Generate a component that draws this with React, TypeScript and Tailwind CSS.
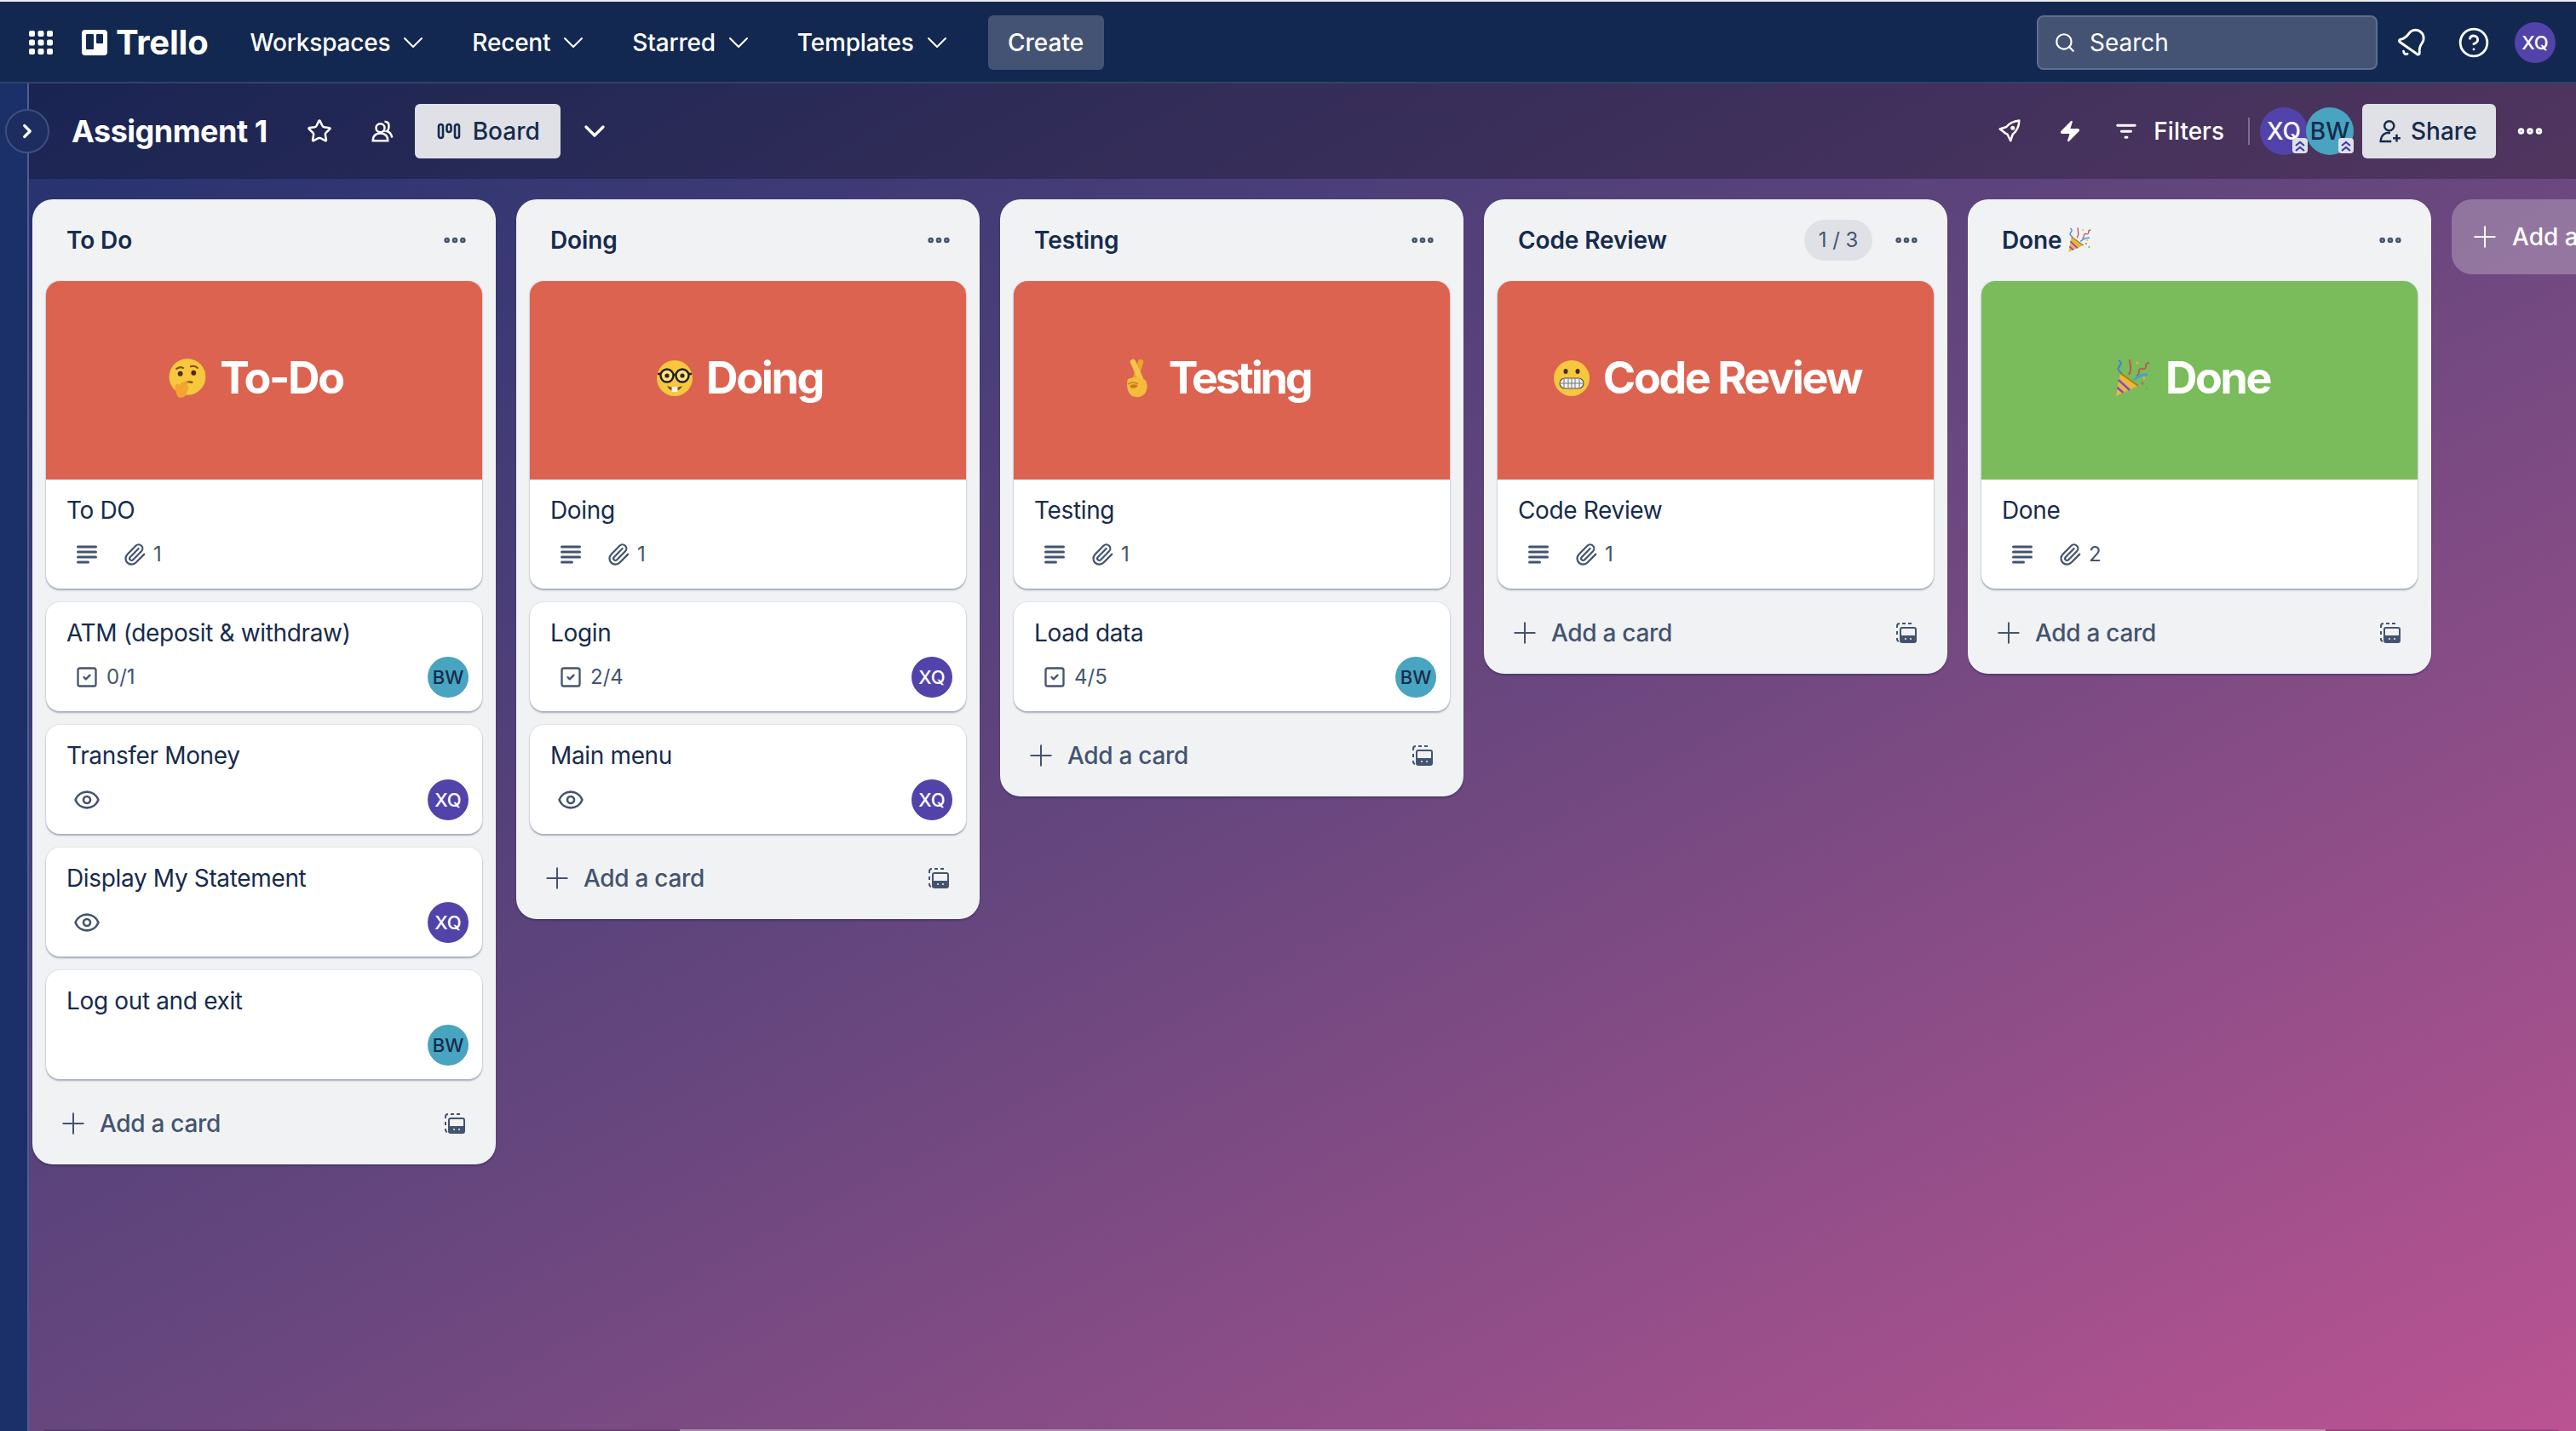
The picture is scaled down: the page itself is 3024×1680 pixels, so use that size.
import { Bell, ChevronDown, ChevronRight, CircleHelp, Ellipsis, Eye, Paperclip, Plus, Search, SquareCheck, Star, Zap } from 'lucide-react'

const font = { fontFamily: 'Inter, "Liberation Sans", sans-serif' }

function ThinkingFace() {
  return (
    <svg viewBox="0 0 44 44" className="w-[46px] h-[46px] shrink-0">
      <circle cx="22" cy="20.500" r="20.500" fill="#f7c83e" />
      <path d="M9 12q5-4 9-1M25 9q5-2 9 2" stroke="#7a4a12" strokeWidth="2" fill="none" />
      <circle cx="14" cy="17" r="2.800" fill="#4a2c0b" />
      <circle cx="29" cy="16" r="2.800" fill="#4a2c0b" />
      <path d="M18 28q6-3 10-1" stroke="#7a4a12" strokeWidth="2" fill="none" />
      <path d="M8 30q3-3 5 0l2-3q5-2 9 0l-3 3q3 0 2 3l-2 6q-2 5-7 5t-6-14z" fill="#f2a531" />
    </svg>
  )
}

function NerdFace() {
  return (
    <svg viewBox="0 0 44 44" className="w-[44px] h-[44px] shrink-0">
      <circle cx="22" cy="22" r="21" fill="#f7c83e" />
      <circle cx="13" cy="19" r="7.500" fill="#fbe08a" stroke="#222" strokeWidth="2.400" />
      <circle cx="31" cy="19" r="7.500" fill="#fbe08a" stroke="#222" strokeWidth="2.400" />
      <path d="M20 18h4M2 17h4M38 17h4" stroke="#222" strokeWidth="2.400" />
      <circle cx="13" cy="19" r="2.600" fill="#3b2508" />
      <circle cx="31" cy="19" r="2.600" fill="#3b2508" />
      <path d="M13 31q9 4 18 0q-3 6-9 6t-9-6z" fill="#7a4a12" />
      <rect x="18.500" y="32" width="7" height="6" rx="1" fill="#f4f4f4" />
    </svg>
  )
}

function CrossedFingers() {
  return (
    <svg viewBox="0 0 36 46" className="w-[36px] h-[46px] shrink-0">
      <path d="M16 26L23 4" stroke="#e9a62f" strokeWidth="6.500" strokeLinecap="round" />
      <path d="M23 24L14 4" stroke="#f7c24a" strokeWidth="6.500" strokeLinecap="round" />
      <path d="M8 24q6-3 12-1 9 0 10 5 2 8-2 13-4 5-11 4-7-1-9-8-2-7 0-13z" fill="#f5bb3d" />
      <path d="M8 30q6-4 12 0" stroke="#c5851e" strokeWidth="1.600" fill="none" />
      <path d="M11 31q6-2 9 1q-4 4-9 2z" fill="#c97a1d" />
    </svg>
  )
}

function GrimacingFace() {
  return (
    <svg viewBox="0 0 44 44" className="w-[44px] h-[44px] shrink-0">
      <circle cx="22" cy="22" r="21" fill="#f7c83e" />
      <ellipse cx="15" cy="14" rx="2.500" ry="3" fill="#4a2c0b" />
      <ellipse cx="29" cy="14" rx="2.500" ry="3" fill="#4a2c0b" />
      <rect x="8" y="22" width="28" height="12" rx="6" fill="#f2f2f2" stroke="#555" strokeWidth="1.200" />
      <path d="M8 28h28M13 22v12M18 22v12M22 22v12M26 22v12M31 22v12" stroke="#777" strokeWidth="1" />
    </svg>
  )
}

function PartyPopper({ small }: { small?: boolean }) {
  return (
    <svg viewBox="0 0 48 48" className={small ? 'w-[32px] h-[32px] shrink-0' : 'w-[48px] h-[48px] shrink-0'}>
      <path d="M10 18L31 33 5 45z" fill="#eab83c" />
      <path d="M8 26l13 12M6.500 35l7 6" stroke="#8b46c9" strokeWidth="2.500" />
      <path d="M10 18L31 33" stroke="#b07a16" strokeWidth="2" />
      <path d="M8 3q5 3 1 7t3 8" stroke="#3f7fd8" strokeWidth="2" fill="none" />
      <path d="M21 2l1 8q1 5-2 10" stroke="#c4534b" strokeWidth="2" fill="none" />
      <path d="M44 6q-4 0-4 4t-4 3-4 3-3 5" stroke="#b75f4f" strokeWidth="2" fill="none" />
      <path d="M26 26q8-7 16-6" stroke="#3f9fe0" strokeWidth="2.500" fill="none" />
      <circle cx="36" cy="30" r="1.500" fill="#e0574f" />
      <circle cx="41" cy="36" r="1.500" fill="#5fb35a" />
      <circle cx="30" cy="6" r="1.500" fill="#eab83c" />
      <circle cx="38" cy="24" r="1.500" fill="#eab83c" />
    </svg>
  )
}

function TemplateIcon() {
  return (
    <svg viewBox="0 0 24 24" className="w-[24px] h-[24px] text-[#44546f]" fill="none" stroke="currentColor" strokeWidth="2">
      <path d="M1 6V4a3 3 0 0 1 3-3M7 1h4M14 1h4M21 1h0M1 10v4M1 18v2a3 3 0 0 0 2 2" />
      <rect x="5" y="6" width="18" height="17" rx="2" />
      <path fill="currentColor" stroke="none" d="M5 15h18v6a2 2 0 0 1-2 2H7a2 2 0 0 1-2-2z" />
      <path d="M10 19h2M16 19h2" stroke="#f1f2f4" strokeWidth="1.500" />
    </svg>
  )
}

function DescriptionIcon() {
  return (
    <svg viewBox="0 0 24 24" className="w-[36px] h-[36px] text-[#44546f]" fill="currentColor">
      <rect x="4" y="5" width="16" height="2" rx="1" />
      <rect x="4" y="9" width="16" height="2" rx="1" />
      <rect x="4" y="13" width="16" height="2" rx="1" />
      <rect x="4" y="17" width="10" height="2" rx="1" />
    </svg>
  )
}

function RocketIcon() {
  return (
    <svg viewBox="0 0 24 24" className="w-[30px] h-[30px] text-white mr-[42px]" fill="none" stroke="currentColor" strokeWidth="2" strokeLinejoin="round">
      <path d="M21 2q-8 1-12 6l-6 2 4 3 1 1q1 0 2 1l3 6 2-6q6-5 6-13z" />
      <circle cx="15" cy="9" r="1" fill="currentColor" />
    </svg>
  )
}

function ShareIcon() {
  return (
    <svg viewBox="0 0 24 24" className="w-[30px] h-[30px]" fill="none" stroke="currentColor" strokeWidth="2">
      <circle cx="11" cy="7" r="4.500" />
      <path d="M12 13.500H9q-5 1-6 7v1h10" />
      <path d="M18 15v7M14.500 18.500h7" />
    </svg>
  )
}

function Avatar({ who }: { who: string }) {
  return who === 'XQ' ? (
    <div className="w-[48px] h-[48px] rounded-full bg-[#5243aa] text-white text-[22px] font-medium flex items-center justify-center">XQ</div>
  ) : (
    <div className="w-[48px] h-[48px] rounded-full bg-[#48a4c0] text-[#172b4d] text-[22px] font-medium flex items-center justify-center">BW</div>
  )
}

type CardData = {
  title: string
  check?: string
  desc?: boolean
  clips?: number
  watch?: boolean
  who?: string
}

type Cover = { color: string; emoji: React.ReactNode; label: string; spacing?: string }

function Card({ card, cover }: { card: CardData; cover?: Cover }) {
  return (
    <div className="bg-white rounded-[16px] shadow-[0_2px_2px_rgba(9,30,66,0.3),0_0_2px_rgba(9,30,66,0.2)] overflow-hidden shrink-0">
      {cover && (
        <div className={cover.spacing ?? 'h-[233px] flex items-center justify-center gap-[15px] pr-[20px] pb-[6px] tracking-[-2.4px]'} style={{ backgroundColor: cover.color }}>
          {cover.emoji}
          <span className="text-[52px] leading-[60px] font-bold text-white">{cover.label}</span>
        </div>
      )}
      <div className="h-[128px] px-[24px] pt-[16px] flex flex-col">
        <div className="text-[28px] leading-[40px] text-[#172b4d] tracking-[-0.35px]">{card.title}</div>
        <div className="mt-[8px] h-[48px] flex items-center text-[#44546f] text-[24px] -mr-[8px]">
          {card.desc && <div className="ml-[6px] flex"><DescriptionIcon /></div>}
          {card.clips && (
            <div className="flex items-center gap-[8px] ml-[24px]">
              <Paperclip className="w-[28px] h-[28px]" strokeWidth={1.9} />
              <span>{card.clips}</span>
            </div>
          )}
          {card.check && (
            <div className="flex items-center gap-[9px] ml-[10px]">
              <SquareCheck className="w-[28px] h-[28px]" strokeWidth={2} />
              <span>{card.check}</span>
            </div>
          )}
          {card.watch && <Eye className="w-[32px] h-[32px] ml-[8px]" strokeWidth={2} />}
          {card.who && <div className="ml-auto"><Avatar who={card.who} /></div>}
        </div>
      </div>
    </div>
  )
}

const lists = [
  {
    name: 'To Do',
    cover: { color: '#db6350', emoji: <ThinkingFace />, label: 'To-Do' },
    cards: [
      { title: 'To DO', desc: true, clips: 1 },
      { title: 'ATM (deposit & withdraw)', check: '0/1', who: 'BW' },
      { title: 'Transfer Money', watch: true, who: 'XQ' },
      { title: 'Display My Statement', watch: true, who: 'XQ' },
      { title: 'Log out and exit', who: 'BW' },
    ],
  },
  {
    name: 'Doing',
    cover: { color: '#db6350', emoji: <NerdFace />, label: 'Doing' },
    cards: [
      { title: 'Doing', desc: true, clips: 1 },
      { title: 'Login', check: '2/4', who: 'XQ' },
      { title: 'Main menu', watch: true, who: 'XQ' },
    ],
  },
  {
    name: 'Testing',
    cover: {
      color: '#db6350',
      emoji: <CrossedFingers />,
      label: 'Testing',
      spacing: 'h-[233px] flex items-center justify-center gap-[20px] pr-[38px] pb-[6px] tracking-[-3.2px]',
    },
    cards: [
      { title: 'Testing', desc: true, clips: 1 },
      { title: 'Load data', check: '4/5', who: 'BW' },
    ],
  },
  {
    name: 'Code Review',
    count: '1 / 3',
    cover: { color: '#db6350', emoji: <GrimacingFace />, label: 'Code Review' },
    cards: [{ title: 'Code Review', desc: true, clips: 1 }],
  },
  {
    name: 'Done',
    popper: true,
    cover: { color: '#7abb5c', emoji: <PartyPopper />, label: 'Done' },
    cards: [{ title: 'Done', desc: true, clips: 2 }],
  },
]

function NavItem({ label }: { label: string }) {
  return (
    <div className="flex items-center gap-[7px] mr-[49px] text-[28px] font-medium text-white tracking-[-0.2px]">
      {label}
      <ChevronDown className="w-[40px] h-[40px]" strokeWidth={1.2} />
    </div>
  )
}

function AdminBadge() {
  return (
    <span className="absolute right-[0px] bottom-[2px] w-[18px] h-[18px] rounded-[4px] bg-[#dfe1e6] flex items-center justify-center">
      <svg viewBox="0 0 16 16" className="w-[16px] h-[16px]" fill="none" stroke="#3d3bb5" strokeWidth="2.200">
        <path d="M3 8l5-4 5 4M3 14l5-4 5 4" />
      </svg>
    </span>
  )
}

export default function App() {
  return (
    <div className="w-[3024px] h-[1680px] overflow-hidden flex flex-col relative bg-[#132850]" style={font}>
      <div className="h-[2px] bg-[#eeeeee] shrink-0" />

      <header className="h-[96px] shrink-0 bg-[#132850] border-b-2 border-[#2e4468] flex items-center pl-[34px] pr-[24px] pt-[2px]">
        <svg viewBox="0 0 28 28" className="w-[28px] h-[28px] mr-[34px] text-white" fill="currentColor">
          <rect x="0" y="0" width="7" height="7" rx="2" />
          <rect x="10.500" y="0" width="7" height="7" rx="2" />
          <rect x="21" y="0" width="7" height="7" rx="2" />
          <rect x="0" y="10.500" width="7" height="7" rx="2" />
          <rect x="10.500" y="10.500" width="7" height="7" rx="2" />
          <rect x="21" y="10.500" width="7" height="7" rx="2" />
          <rect x="0" y="21" width="7" height="7" rx="2" />
          <rect x="10.500" y="21" width="7" height="7" rx="2" />
          <rect x="21" y="21" width="7" height="7" rx="2" />
        </svg>
        <div className="w-[30px] h-[30px] bg-white rounded-[4px] flex gap-[3px] p-[5px] mr-[10px]">
          <div className="w-[9px] h-[18px] bg-[#132850] rounded-[1px]" />
          <div className="w-[8px] h-[11px] bg-[#132850] rounded-[1px]" />
        </div>
        <span className="text-[40px] font-bold text-white mr-[49px] tracking-[-0.2px]">Trello</span>
        <NavItem label="Workspaces" />
        <NavItem label="Recent" />
        <NavItem label="Starred" />
        <NavItem label="Templates" />
        <div className="w-[136px] h-[64px] -ml-[9px] rounded-[6px] bg-[#445374] text-white text-[28px] font-medium flex items-center justify-center">Create</div>

        <div className="ml-auto w-[400px] h-[64px] rounded-[8px] bg-[#445374] border-2 border-[#5f6e8c] flex items-center pl-[18px] gap-[16px] text-white text-[28px]">
          <Search className="w-[26px] h-[26px]" strokeWidth={2} />
          Search
        </div>
        <Bell className="w-[38px] h-[38px] text-white ml-[22px] rotate-[35deg]" strokeWidth={1.8} />
        <CircleHelp className="w-[38px] h-[38px] text-white ml-[34px]" strokeWidth={1.8} />
        <div className="w-[48px] h-[48px] ml-[29px] rounded-full bg-[#5243aa] text-white text-[22px] font-medium flex items-center justify-center">XQ</div>
      </header>

      <div className="flex-1 flex min-h-0">
        <aside className="w-[34px] shrink-0 bg-[#1b3068] border-r-2 border-[#4c5f8f]" />
        <main className="flex-1 min-w-0 flex flex-col bg-linear-to-br from-[#22316f] via-[#67467e] to-[#bb5392]">
          <div className="h-[112px] shrink-0 bg-black/25 flex items-center pl-[50px] pr-[36px]">
            <span className="text-[36px] font-bold text-white mr-[46px] tracking-[-0.5px]">Assignment 1</span>
            <Star className="w-[30px] h-[30px] text-white mr-[44px]" strokeWidth={2} />
            <svg viewBox="0 0 24 24" className="w-[30px] h-[30px] text-white mr-[23px]" fill="none" stroke="currentColor" strokeWidth="2">
              <circle cx="10" cy="9" r="4" />
              <path d="M3 21q0-7 7-7t7 7z" />
              <path d="M14 3q4 0 4 4t-2 5q4 1 5 6" />
            </svg>
            <div className="w-[171px] h-[64px] rounded-[6px] bg-[#dfe1e6] text-[#172b4d] text-[28px] font-medium flex items-center pl-[26px] gap-[14px]">
              <svg viewBox="0 0 28 20" className="w-[28px] h-[20px]" fill="none" stroke="currentColor" strokeWidth="2.600">
                <rect x="2" y="2" width="5" height="16" rx="2.500" />
                <rect x="11.500" y="2" width="5" height="9" rx="2.500" />
                <rect x="21" y="2" width="5" height="16" rx="2.500" />
              </svg>
              Board
            </div>
            <ChevronDown className="w-[40px] h-[40px] text-white ml-[20px]" strokeWidth={2} />

            <div className="ml-auto flex items-center">
              <RocketIcon />
              <Zap className="w-[28px] h-[28px] text-white fill-white mr-[38px]" strokeWidth={1} />
              <svg viewBox="0 0 24 24" className="w-[28px] h-[28px] text-white mr-[18px]" fill="currentColor">
                <rect x="2" y="5" width="20" height="2.500" rx="1.200" />
                <rect x="6" y="11" width="12" height="2.500" rx="1.200" />
                <rect x="10" y="17" width="4" height="2.500" rx="1.200" />
              </svg>
              <span className="text-[28px] font-medium text-white">Filters</span>
              <div className="w-[2px] h-[32px] bg-white/30 ml-[28px] mr-[12px]" />
              <div className="relative w-[56px] h-[56px] rounded-full bg-[#5243aa] text-white text-[28px] font-medium flex items-center justify-center">
                XQ
                <AdminBadge />
              </div>
              <div className="relative w-[56px] h-[56px] -ml-[2px] rounded-full bg-[#48a4c0] text-[#172b4d] text-[28px] font-medium flex items-center justify-center">
                BW
                <AdminBadge />
              </div>
              <div className="w-[157px] h-[64px] ml-[10px] rounded-[6px] bg-[#dfe1e6] text-[#172b4d] text-[28px] font-medium flex items-center pl-[18px] gap-[9px]">
                <ShareIcon />
                Share
              </div>
              <Ellipsis className="w-[36px] h-[36px] text-white ml-[22px]" strokeWidth={3} />
            </div>
          </div>

          <div className="flex-1 min-h-0 flex items-start gap-[24px] pl-[4px] pt-[24px]">
            {lists.map((list) => (
              <section key={list.name} className="w-[544px] shrink-0 bg-[#f1f2f4] rounded-[24px] px-[16px] pb-[12px] shadow-[0_2px_2px_rgba(9,30,66,0.3)]">
                <div className="h-[96px] flex items-center pl-[24px] pr-[16px]">
                  <span className="text-[28px] font-semibold text-[#172b4d] tracking-[-0.1px]">{list.name}</span>
                  {list.popper && <span className="ml-[4px]"><PartyPopper small /></span>}
                  {list.count && (
                    <span className="ml-auto w-[80px] h-[48px] rounded-full bg-[#dfe1e6] text-[#44546f] text-[24px] flex items-center justify-center">{list.count}</span>
                  )}
                  <Ellipsis className={list.count ? 'w-[32px] h-[32px] text-[#44546f] ml-[24px]' : 'w-[32px] h-[32px] text-[#44546f] ml-auto'} strokeWidth={3} />
                </div>
                <div className="flex flex-col gap-[16px]">
                  {list.cards.map((card, i) => (
                    <Card key={card.title} card={card} cover={i === 0 ? list.cover : undefined} />
                  ))}
                </div>
                <div className="mt-[16px] h-[72px] flex items-center pl-[12px] pr-[20px] text-[#44546f] text-[28px] font-medium tracking-[-0.3px]">
                  <Plus className="w-[40px] h-[40px] mr-[11px]" strokeWidth={1.2} />
                  Add a card
                  <span className="ml-auto flex"><TemplateIcon /></span>
                </div>
              </section>
            ))}
            <div className="w-[544px] h-[88px] shrink-0 rounded-[24px] bg-white/25 flex items-center pl-[19px] gap-[12px] text-white text-[28px] font-medium">
              <Plus className="w-[40px] h-[40px]" strokeWidth={1.2} />
              Add another list
            </div>
          </div>

          <div className="h-[2px] shrink-0 ml-[18px] mr-[21px] bg-black/15">
            <div className="h-full ml-[746px] w-[1932px] bg-white/40" />
          </div>
        </main>
      </div>

      <div className="absolute left-[6px] top-[128px] w-[52px] h-[52px] rounded-full bg-[#1d2d60] border-2 border-[#3d4f7e] flex items-center justify-center">
        <ChevronRight className="w-[26px] h-[26px] text-white" strokeWidth={3} />
      </div>
    </div>
  )
}
